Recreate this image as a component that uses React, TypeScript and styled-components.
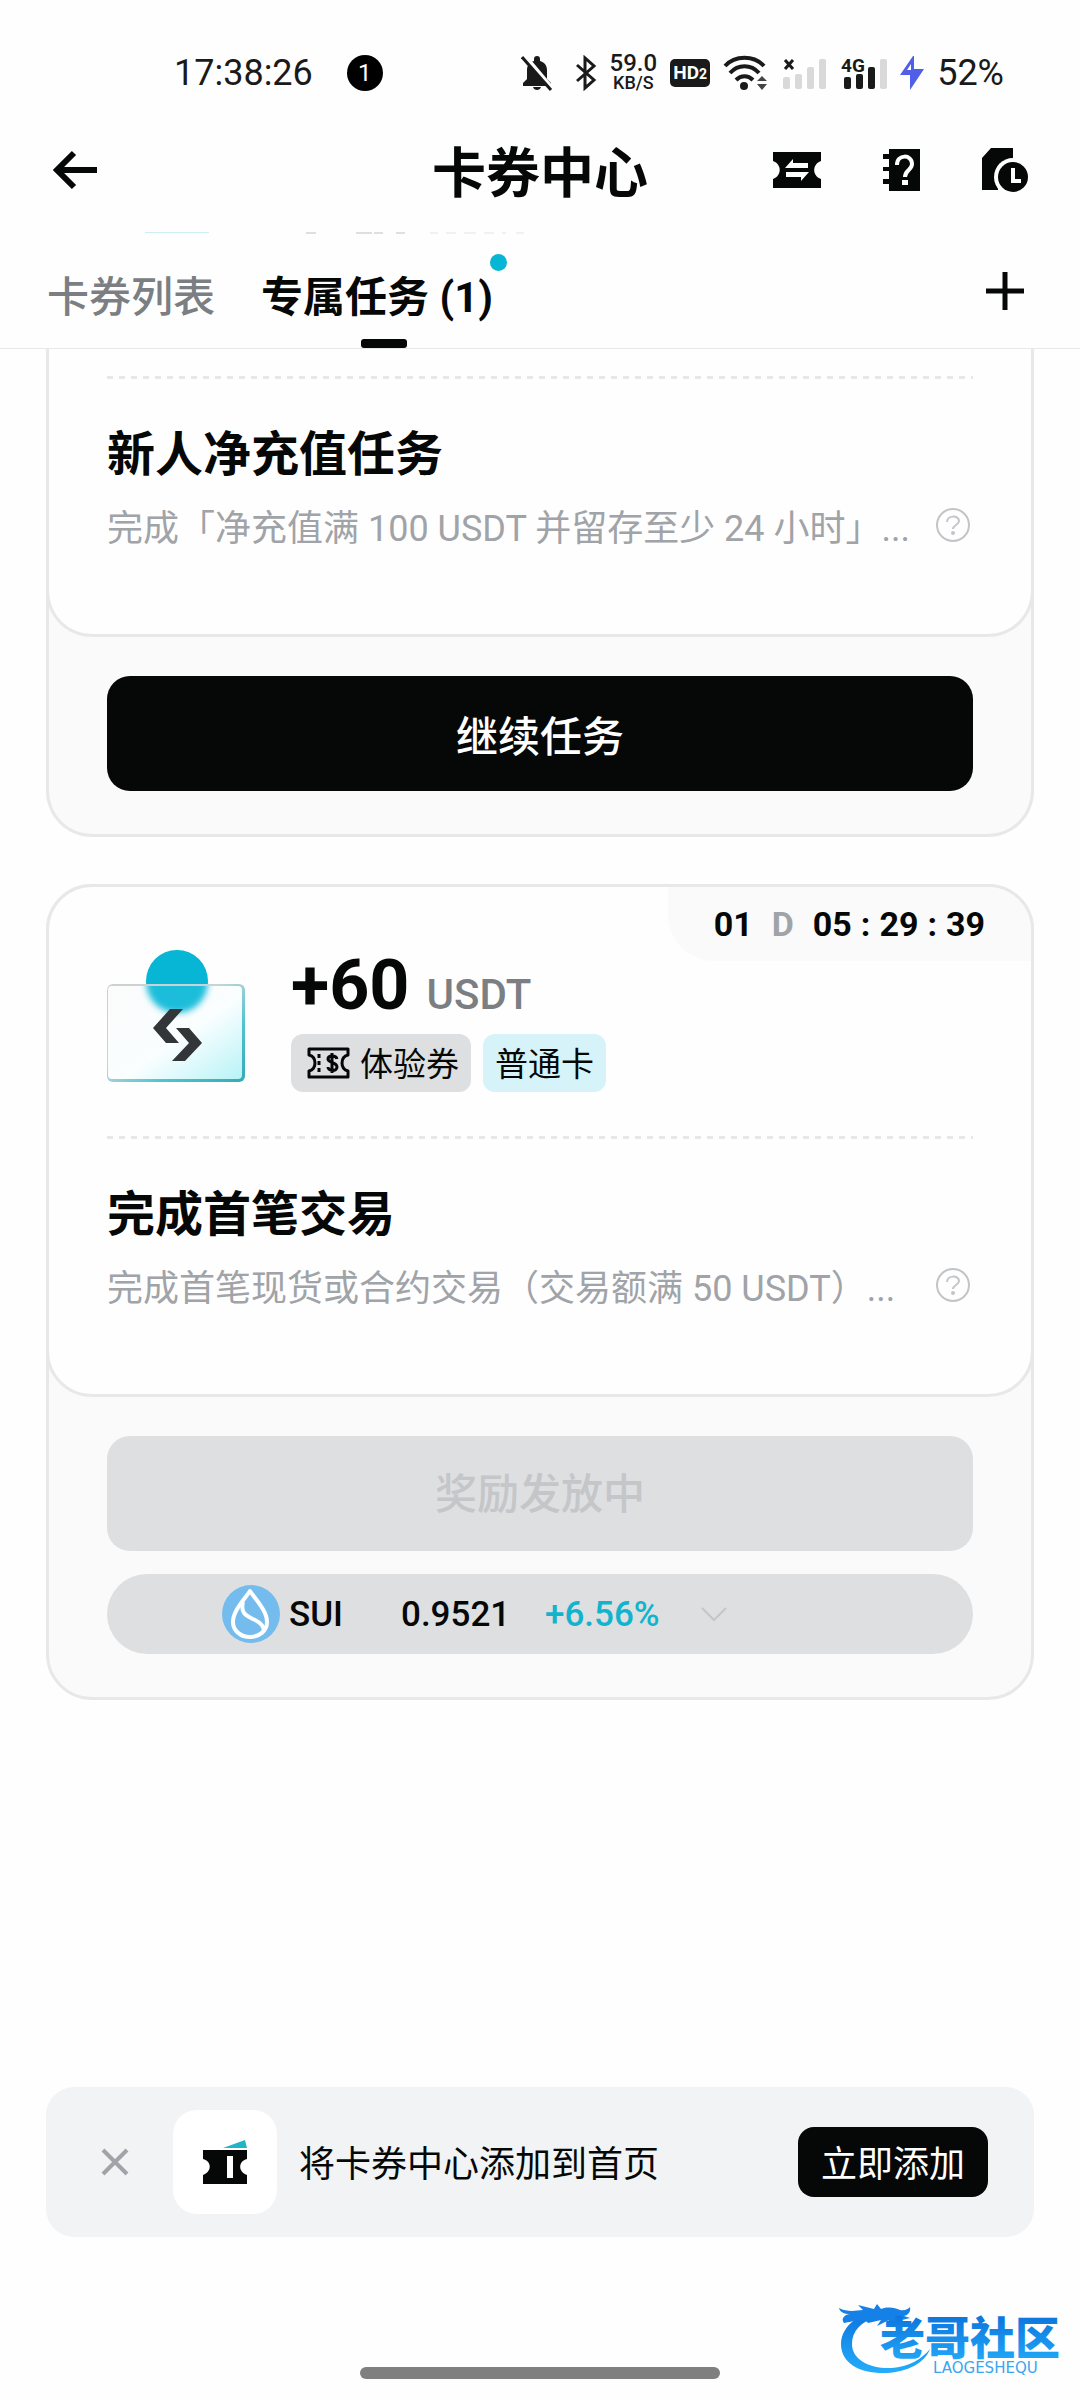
import React from 'react';
import styled, { createGlobalStyle } from 'styled-components';

const ink = '#060807';
const muted = '#7b7e83';
const faint = '#a0a3a7';
const line = '#e8e8e8';
const cyan = '#06b6d4';
const grey = '#dedfe1';

const GlobalStyle = createGlobalStyle`
  * { box-sizing: border-box; }
  body {
    margin: 0;
    background: #fefefe;
    color: ${ink};
    font-family: Roboto, 'Noto Sans CJK SC', sans-serif;
  }
  button {
    border: 0;
    padding: 0;
    background: none;
    color: inherit;
    font: inherit;
    cursor: pointer;
  }
  h1, h2, p { margin: 0; }
  svg { display: block; flex: none; }
`;

const Page = styled.div`
  position: relative;
  display: flex;
  flex-direction: column;
  min-height: 100vh;
`;

/* ---------- status bar ---------- */

const StatusBar = styled.div`
  display: flex;
  align-items: center;
  justify-content: space-between;
  height: 96px;
  padding: 50px 76px 0 174px;
  color: #1a1a1a;
  font-size: 36px;
  line-height: 46px;
`;

const StatusGroup = styled.div<{ $gap: number }>`
  display: flex;
  align-items: center;
  gap: ${(p) => p.$gap}px;
`;

const NoticeCount = styled.span`
  width: 36px;
  height: 36px;
  border-radius: 50%;
  background: #000;
  color: #fff;
  font-size: 24px;
  line-height: 36px;
  text-align: center;
`;

const NetSpeed = styled.span`
  display: flex;
  flex-direction: column;
  align-items: center;
  font-size: 24px;
  font-weight: 500;
  line-height: 19px;
`;

const NetUnit = styled.span`
  font-size: 18px;
`;

const HdBadge = styled.span`
  width: 40px;
  height: 28px;
  border-radius: 5px;
  background: #1a1a1a;
  color: #fff;
  font-size: 19px;
  font-weight: 700;
  line-height: 28px;
  text-align: center;
`;

const HdIndex = styled.span`
  font-size: 14px;
`;

/* ---------- top bar and tabs ---------- */

const TopBar = styled.header`
  display: grid;
  grid-template-columns: 1fr auto 1fr;
  align-items: center;
  height: 136px;
  padding: 12px 52px 0;
`;

const Actions = styled.div<{ $end?: boolean }>`
  display: flex;
  justify-content: ${(p) => (p.$end ? 'flex-end' : 'flex-start')};
  align-items: center;
  gap: 62px;
`;

const PageTitle = styled.h1`
  padding-top: 10px;
  font-size: 54px;
  font-weight: 700;
  line-height: 72px;
`;

const Peek = styled.svg`
  width: 100%;
  height: 2px;
`;

const TabBar = styled.nav`
  display: flex;
  align-items: stretch;
  gap: 46px;
  height: 115px;
  padding: 0 55px 0 47px;
  border-bottom: 1px solid ${line};
`;

const Tab = styled.button<{ $active?: boolean }>`
  position: relative;
  padding: ${(p) => (p.$active ? '14px 14px 0 0' : '14px 0 0')};
  color: ${(p) => (p.$active ? ink : muted)};
  font-size: 42px;
  font-weight: ${(p) => (p.$active ? 700 : 500)};
  line-height: 60px;

  ${(p) =>
    p.$active &&
    `&::after {
      content: '';
      position: absolute;
      left: 50%;
      bottom: 0;
      width: 46px;
      height: 9px;
      margin-left: -23px;
      border-radius: 3px;
      background: ${ink};
    }`}
`;

const TabDot = styled.span`
  position: absolute;
  top: 20px;
  right: 0;
  width: 17px;
  height: 17px;
  border-radius: 50%;
  background: ${cyan};
`;

const AddButton = styled.button`
  align-self: center;
  margin-left: auto;
`;

/* ---------- task cards ---------- */

const CardList = styled.main`
  display: flex;
  flex-direction: column;
  gap: 47px;
  padding: 0 46px 48px;
`;

const Card = styled.article<{ $cut?: boolean }>`
  border: 3px solid ${line};
  border-top-width: ${(p) => (p.$cut ? 0 : 3)}px;
  border-radius: ${(p) => (p.$cut ? '0 0 46px 46px' : '46px')};
  background: #fafafa;
`;

const Panel = styled.section<{ $cut?: boolean }>`
  position: relative;
  margin: ${(p) => (p.$cut ? '0 -3px' : '-3px -3px 0')};
  padding: ${(p) => (p.$cut ? '27px' : '62px')} 58px 81px;
  border: 3px solid ${line};
  border-top-width: ${(p) => (p.$cut ? 0 : 3)}px;
  border-radius: ${(p) => (p.$cut ? '0 0 46px 46px' : '46px')};
  background: #fefefe;
`;

const Reward = styled.div`
  display: flex;
  align-items: flex-start;
  gap: 46px;
  margin-bottom: 44px;
`;

const RewardBody = styled.div`
  display: flex;
  flex-direction: column;
  gap: 13px;
`;

const Amount = styled.p`
  display: flex;
  align-items: baseline;
  gap: 17px;
  font-size: 70px;
  font-weight: 700;
  line-height: 72px;
`;

const Unit = styled.span`
  color: ${muted};
  font-size: 42px;
  font-weight: 500;
  line-height: 42px;
`;

const Tags = styled.div`
  display: flex;
  gap: 12px;
`;

const Tag = styled.span<{ $tone: string }>`
  display: flex;
  align-items: center;
  gap: 10px;
  height: 58px;
  padding: 4px 12px 0;
  border-radius: 12px;
  background: ${(p) => p.$tone};
  font-size: 33px;
  line-height: 54px;

  svg { margin: 0 0 4px 4px; }
`;

const Countdown = styled.div`
  position: absolute;
  top: 0;
  right: 0;
  display: flex;
  gap: 9px;
  padding: 0 46px;
  border-radius: 0 43px 0 46px;
  background: #fafafa;
  font-size: 34px;
  font-weight: 700;
  line-height: 74px;
`;

const DayMark = styled.span`
  margin: 0 10px;
  color: ${faint};
`;

const Dashes = styled.div`
  height: 3px;
  background: repeating-linear-gradient(90deg, ${line} 0 6px, transparent 6px 12px);
`;

const TaskTitle = styled.h2`
  margin: 46px 0 20px;
  font-size: 48px;
  font-weight: 700;
  line-height: 60px;
`;

const TaskLine = styled.div`
  display: flex;
  align-items: flex-start;
  justify-content: space-between;
  gap: 20px;
`;

const TaskText = styled.p`
  color: ${faint};
  font-size: 36px;
  line-height: 48px;
`;

const HelpButton = styled.button`
  flex: none;
  padding: 3px;
`;

const CardFoot = styled.footer`
  display: flex;
  flex-direction: column;
  gap: 23px;
  padding: 39px 58px 43px;
`;

const MainButton = styled.button`
  height: 115px;
  border-radius: 23px;
  background: ${ink};
  color: #fff;
  font-size: 42px;
  font-weight: 500;

  &:disabled {
    padding-bottom: 6px;
    background: ${grey};
    color: #c4c6c9;
    cursor: default;
  }
`;

const Quote = styled.button`
  display: flex;
  align-items: center;
  height: 80px;
  padding: 0 115px;
  border-radius: 40px;
  background: #dddfe0;
  font-size: 35px;
  font-weight: 500;
  text-align: left;
`;

const QuoteCell = styled.span<{ $width: number; $color?: string }>`
  width: ${(p) => p.$width}px;
  color: ${(p) => p.$color || ink};
`;

const CoinName = styled(QuoteCell)`
  margin-left: 9px;
`;

/* ---------- bottom ---------- */

const Prompt = styled.aside`
  display: flex;
  align-items: center;
  height: 150px;
  margin: auto 46px 0;
  padding: 0 46px 0 55px;
  border-radius: 28px;
  background: #f1f3f5;
  font-size: 36px;
`;

const AppTile = styled.div`
  display: grid;
  place-items: center;
  width: 104px;
  height: 104px;
  margin: 0 22px 0 44px;
  border-radius: 24px;
  background: #fff;
`;

const PromptText = styled.p`
  flex: 1;
  padding-top: 6px;
  line-height: 48px;
`;

const PromptButton = styled.button`
  height: 70px;
  padding: 6px 23px 0;
  border-radius: 16px;
  background: ${ink};
  color: #fff;
  line-height: 64px;
`;

const HomeArea = styled.div`
  display: flex;
  justify-content: center;
  align-items: flex-end;
  height: 163px;
  padding-bottom: 21px;
`;

const HomeBar = styled.div`
  width: 360px;
  height: 12px;
  border-radius: 6px;
  background: #7f7f7f;
`;

const Watermark = styled.svg`
  position: absolute;
  right: 14px;
  bottom: 20px;
`;

/* ---------- drawings ---------- */

const BellOff = () => (
  <svg width="32" height="36" viewBox="0 0 32 36">
    <path d="M2 31v-3l4-4v-9c0-5 3-8 7-9V4a3 3 0 0 1 6 0v2c4 1 7 4 7 9v9l4 4v3z" fill="#1a1a1a" />
    <path d="M12 32h8c-1 4-7 4-8 0z" fill="#1a1a1a" />
    <path d="M4 1l28 33" stroke="#fefefe" strokeWidth="4" />
    <path d="M1 2l29 33" stroke="#1a1a1a" strokeWidth="3" />
  </svg>
);

const Bluetooth = () => (
  <svg width="22" height="36" viewBox="0 0 22 36" fill="none" stroke="#1a1a1a" strokeWidth="3">
    <path d="M2 10l17 15-9 8V3l9 8L2 26" />
  </svg>
);

const Wifi = () => (
  <svg width="46" height="36" viewBox="0 0 46 36">
    <g fill="none" stroke="#1a1a1a" strokeWidth="4">
      <path d="M2 11c10-11 29-11 39 0" />
      <path d="M7 18c8-9 21-9 29 0" />
      <path d="M13 25c5-5 12-5 17 0" />
    </g>
    <circle cx="21" cy="31" r="4" fill="#1a1a1a" />
    <path d="M34 26l5-5 5 5zM34 29l5 6 5-6z" fill="#444" />
  </svg>
);

const NoSignal = () => (
  <svg width="44" height="36" viewBox="0 0 44 36">
    <path d="M2 5l8 9M10 5l-8 9" stroke="#1a1a1a" strokeWidth="3" />
    <g fill="#d9d9d9">
      <rect x="0" y="22" width="7" height="12" rx="2" />
      <rect x="12" y="19" width="7" height="15" rx="2" />
      <rect x="24" y="12" width="7" height="22" rx="2" />
      <rect x="36" y="4" width="7" height="30" rx="2" />
    </g>
  </svg>
);

const Signal4G = () => (
  <svg width="46" height="36" viewBox="0 0 46 36">
    <text x="0" y="17" fontSize="19" fontWeight="700" fill="#1a1a1a">4G</text>
    <g fill="#1a1a1a">
      <rect x="3" y="22" width="7" height="12" rx="2" />
      <rect x="15" y="19" width="7" height="15" rx="2" />
      <rect x="27" y="12" width="7" height="22" rx="2" />
    </g>
    <rect x="39" y="4" width="7" height="30" rx="2" fill="#d9d9d9" />
  </svg>
);

const Bolt = () => (
  <svg width="24" height="34" viewBox="0 0 24 34">
    <path d="M13 0L0 19h10v15L24 13H14V0z" fill="#4f5fe8" />
    <path d="M11 8v6H7z" fill="#fefefe" />
  </svg>
);

const BackArrow = () => (
  <svg width="46" height="40" viewBox="0 0 46 40" fill="none" stroke={ink} strokeWidth="6">
    <path d="M22 3L5 20l17 17M5 20h40" />
  </svg>
);

const TicketSwap = () => (
  <svg width="48" height="36" viewBox="0 0 48 36">
    <path d="M0 0h48v9c-9 3-9 15 0 18v9H0v-9c9-3 9-15 0-18z" fill={ink} />
    <path d="M12 16l8-9v4h15v5zM36 20l-8 9v-4H13v-5z" fill="#fefefe" />
  </svg>
);

const HelpBook = () => (
  <svg width="37" height="42" viewBox="0 0 37 42">
    <path d="M6 0h31v42H6v-7H0v-5h6v-8H0v-4h6v-8H0V5h6z" fill={ink} />
    <path d="M14 16c0-11 15-11 15-1 0 6-7 6-7 13" fill="none" stroke="#fefefe" strokeWidth="4" />
    <rect x="19" y="31" width="6" height="5" fill="#fefefe" />
  </svg>
);

const FileClock = () => (
  <svg width="46" height="44" viewBox="0 0 46 44">
    <path d="M9 0h22v20H16v22H0V10z" fill={ink} />
    <circle cx="31" cy="29" r="19" fill="#fefefe" />
    <circle cx="31" cy="29" r="15" fill={ink} />
    <path d="M31 20v13h8" fill="none" stroke="#fefefe" strokeWidth="4" />
  </svg>
);

const Plus = () => (
  <svg width="40" height="40" viewBox="0 0 40 40" stroke={ink} strokeWidth="5">
    <path d="M20 1v38M1 20h38" />
  </svg>
);

const CouponArt = () => (
  <svg width="138" height="133" viewBox="0 0 138 133">
    <defs>
      <linearGradient id="glass" x1="0" y1="0" x2="1" y2="1">
        <stop offset="0" stopColor="#fbfbfb" />
        <stop offset="0.55" stopColor="#fafeff" />
        <stop offset="1" stopColor="#b8f3f7" />
      </linearGradient>
      <linearGradient id="edge" x1="0" y1="0" x2="1" y2="1">
        <stop offset="0" stopColor="#cfcfcf" />
        <stop offset="0.4" stopColor="#c4d6d9" />
        <stop offset="0.7" stopColor="#4fc3cf" />
        <stop offset="1" stopColor="#35a9b5" />
      </linearGradient>
      <filter id="soft" x="-30%" y="-30%" width="160%" height="160%">
        <feGaussianBlur stdDeviation="3" />
      </filter>
      <clipPath id="above"><rect width="138" height="36" /></clipPath>
      <clipPath id="below"><rect x="1" y="37" width="134" height="92" /></clipPath>
    </defs>
    <circle cx="70" cy="32" r="31" fill={cyan} clipPath="url(#above)" />
    <rect x="0" y="35" width="138" height="98" rx="6" fill="url(#edge)" />
    <rect x="1" y="37" width="134" height="93" rx="4" fill="url(#glass)" />
    <g clipPath="url(#below)">
      <circle cx="70" cy="33" r="31" fill="#1fbddb" filter="url(#soft)" />
    </g>
    <path d="M63 60h13L59 79l13 15H59L46 79zM69 79h13l13 15-17 18H65l17-18z" fill="#333638" />
  </svg>
);

const TicketDollar = () => (
  <svg width="43" height="32" viewBox="0 0 43 32">
    <path
      d="M2 2h39v6c-8 2-8 14 0 16v6H2v-6c8-2 8-14 0-16z"
      fill="none"
      stroke={ink}
      strokeWidth="3"
      strokeLinejoin="round"
    />
    <path d="M12 7v18" stroke={ink} strokeWidth="3" strokeDasharray="4 3" />
    <path
      d="M30 12c-1-4-9-4-9 0s9 3 9 8-9 4-9 0M25 6v20"
      fill="none"
      stroke={ink}
      strokeWidth="3"
    />
  </svg>
);

const HelpCircle = () => (
  <svg width="34" height="34" viewBox="0 0 34 34" fill="none" stroke="#c2c4c7" strokeWidth="2">
    <circle cx="17" cy="17" r="16" />
    <path d="M11 14c0-7 12-7 12-1 0 4-6 4-6 8" />
    <circle cx="17" cy="25" r="1" fill="#c2c4c7" />
  </svg>
);

const SuiLogo = () => (
  <svg width="58" height="58" viewBox="0 0 58 58">
    <circle cx="29" cy="29" r="29" fill="#74bcee" />
    <g fill="none" stroke="#fff" strokeWidth="4" strokeLinejoin="round">
      <path d="M28 6c-6 9-17 20-17 31 0 9 8 15 17 15s17-6 17-15c0-11-11-22-17-31z" />
      <path d="M21 17c-3 12 4 14 12 18 6 3 9 6 9 11" />
    </g>
  </svg>
);

const ChevronDown = () => (
  <svg width="26" height="16" viewBox="0 0 26 16" fill="none" stroke="#c4c6c8" strokeWidth="2">
    <path d="M1 2l12 12L25 2" />
  </svg>
);

const Cross = () => (
  <svg width="28" height="28" viewBox="0 0 28 28" stroke={faint} strokeWidth="4">
    <path d="M2 2l24 24M26 2L2 26" />
  </svg>
);

const AppTicket = () => (
  <svg width="44" height="44" viewBox="0 0 44 44">
    <path d="M20 8L42 0l2 8z" fill="#1fb5c6" />
    <path d="M0 10h44v9c-9 2-9 13 0 16v9H0v-9c9-3 9-14 0-16z" fill={ink} />
    <rect x="24" y="16" width="6" height="22" fill="#fff" />
  </svg>
);

const Community = () => (
  <Watermark width="228" height="80" viewBox="0 0 228 80">
    <defs>
      <linearGradient id="wave" x1="0" y1="0" x2="0" y2="1">
        <stop offset="0" stopColor="#0b72dc" />
        <stop offset="1" stopColor="#24adfa" />
      </linearGradient>
    </defs>
    <path
      d="M44 10C22 12 3 26 3 44c0 20 20 30 46 29 20-1 38-10 43-24-8 10-22 18-38 19-22 1-40-8-40-24 0-13 9-22 24-27z"
      fill="url(#wave)"
    />
    <path
      d="M1 8c8 4 15 3 24 2L20 5l16 4 3-5 4 5c8-3 14-1 19 1 5 1 8-1 10-3 1 5-2 8-6 9l6 2-8 2 4 4-12-3-8 3 3-4-12 6 4-6-13 3c-3-5-18-1-24 0C2 18 8 14 12 14 6 14 2 12 1 8z"
      fill="#1580e6"
    />
    <text x="42" y="55" fontSize="45" fontWeight="900" fill="url(#wave)">老哥社区</text>
    <text x="95" y="73" fontSize="15" fontFamily="'DejaVu Sans', sans-serif" fill="#3aa6f0">LAOGESHEQU</text>
  </Watermark>
);

/* ---------- page ---------- */

type TaskProps = { title: string; text: string };

const Task = ({ title, text }: TaskProps) => (
  <>
    <Dashes />
    <TaskTitle>{title}</TaskTitle>
    <TaskLine>
      <TaskText>{text}</TaskText>
      <HelpButton type="button" aria-label="任务说明"><HelpCircle /></HelpButton>
    </TaskLine>
  </>
);

export default function App() {
  return (
    <Page>
      <GlobalStyle />
      <StatusBar>
        <StatusGroup $gap={34}>
          <span>17:38:26</span>
          <NoticeCount>1</NoticeCount>
        </StatusGroup>
        <StatusGroup $gap={13}>
          <StatusGroup $gap={22}>
            <BellOff />
            <Bluetooth />
          </StatusGroup>
          <NetSpeed>
            59.0
            <NetUnit>KB/S</NetUnit>
          </NetSpeed>
          <HdBadge>HD<HdIndex>2</HdIndex></HdBadge>
          <StatusGroup $gap={14}>
            <Wifi />
            <NoSignal />
            <Signal4G />
          </StatusGroup>
          <Bolt />
          <span>52%</span>
        </StatusGroup>
      </StatusBar>

      <TopBar>
        <Actions>
          <button type="button" aria-label="返回"><BackArrow /></button>
        </Actions>
        <PageTitle>卡券中心</PageTitle>
        <Actions $end>
          <button type="button" aria-label="兑换"><TicketSwap /></button>
          <button type="button" aria-label="帮助"><HelpBook /></button>
          <button type="button" aria-label="历史记录"><FileClock /></button>
        </Actions>
      </TopBar>

      <Peek>
        <rect x="145" width="64" height="1" fill="#cdeff3" />
        <path d="M306 1h10M356 1h16M374 1h9M396 1h9" stroke="#c0c0c0" strokeWidth="1" />
        <path d="M430 1h8M446 1h10M464 1h12M484 1h10M502 1h4M516 1h8" stroke="#e4e4e4" strokeWidth="1" />
      </Peek>

      <TabBar>
        <Tab type="button">卡券列表</Tab>
        <Tab type="button" $active>
          专属任务 (1)
          <TabDot />
        </Tab>
        <AddButton type="button" aria-label="添加"><Plus /></AddButton>
      </TabBar>

      <CardList>
        <Card $cut>
          <Panel $cut>
            <Task title="新人净充值任务" text="完成「净充值满 100 USDT 并留存至少 24 小时」..." />
          </Panel>
          <CardFoot>
            <MainButton type="button">继续任务</MainButton>
          </CardFoot>
        </Card>

        <Card>
          <Panel>
            <Countdown>
              <span>01</span>
              <DayMark>D</DayMark>
              <span>05</span>
              <span>:</span>
              <span>29</span>
              <span>:</span>
              <span>39</span>
            </Countdown>
            <Reward>
              <CouponArt />
              <RewardBody>
                <Amount>+60 <Unit>USDT</Unit></Amount>
                <Tags>
                  <Tag $tone={grey}><TicketDollar />体验券</Tag>
                  <Tag $tone="#d5f3f8">普通卡</Tag>
                </Tags>
              </RewardBody>
            </Reward>
            <Task title="完成首笔交易" text="完成首笔现货或合约交易（交易额满 50 USDT）..." />
          </Panel>
          <CardFoot>
            <MainButton type="button" disabled>奖励发放中</MainButton>
            <Quote type="button">
              <SuiLogo />
              <CoinName $width={112}>SUI</CoinName>
              <QuoteCell $width={144}>0.9521</QuoteCell>
              <QuoteCell $width={156} $color="#12b3cc">+6.56%</QuoteCell>
              <ChevronDown />
            </Quote>
          </CardFoot>
        </Card>
      </CardList>

      <Prompt>
        <button type="button" aria-label="关闭"><Cross /></button>
        <AppTile><AppTicket /></AppTile>
        <PromptText>将卡券中心添加到首页</PromptText>
        <PromptButton type="button">立即添加</PromptButton>
      </Prompt>
      <HomeArea>
        <HomeBar />
      </HomeArea>
      <Community />
    </Page>
  );
}
